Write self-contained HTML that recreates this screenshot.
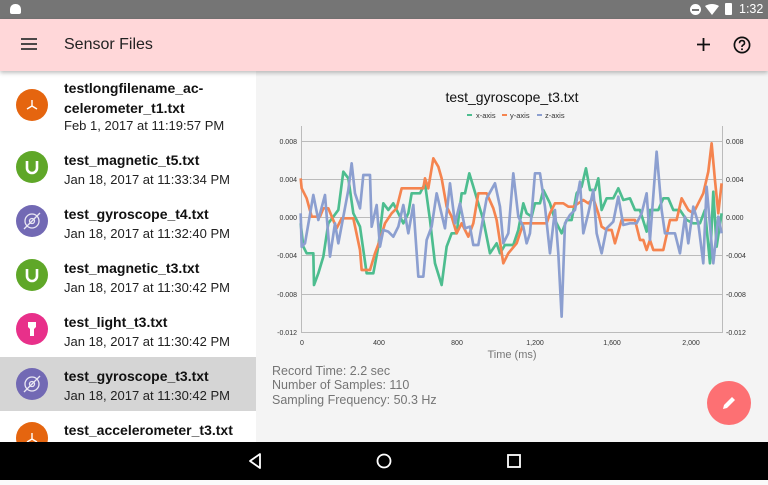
<!DOCTYPE html>
<html><head><meta charset="utf-8"><style>
*{margin:0;padding:0;box-sizing:border-box}
body{width:768px;height:480px;overflow:hidden;position:relative;font-family:"Liberation Sans",sans-serif;background:#fafafa}
.status{position:absolute;left:0;top:0;width:768px;height:19px;background:#757575;color:#fff;font-size:12px}
.appbar{position:absolute;left:0;top:19px;width:768px;height:52px;background:#ffd7d9;box-shadow:0 2px 4px rgba(0,0,0,.25);z-index:2}
.appbar .t{position:absolute;left:64px;top:17px;font-size:16px;color:#222}
.list{position:absolute;left:0;top:71px;width:256px;height:371px;background:#fff;overflow:hidden}
.item{position:absolute;left:0;width:256px}
.ic{position:absolute;left:16px;width:32px;height:32px;border-radius:50%}
.ic svg{position:absolute;left:0;top:0}
.ti{position:absolute;left:64px;font-size:14px;font-weight:bold;color:#111;line-height:20px}
.dt{position:absolute;left:64px;font-size:13px;color:#222}
.right{position:absolute;left:256px;top:71px;width:512px;height:371px;background:#f4f4f4}
.nav{position:absolute;left:0;top:442px;width:768px;height:38px;background:#000}
.info{position:absolute;left:272px;font-size:12.5px;color:#757575}
</style></head><body>
<div class="status">
<div style="position:absolute;left:10px;top:4px;width:11px;height:10px;background:#fff;border-radius:5px 5px 2px 2px"></div>
<div style="position:absolute;left:690px;top:4px;width:11px;height:11px;background:#fff;border-radius:50%"><div style="margin:5px 2px;height:1.5px;background:#757575"></div></div>
<svg style="position:absolute;left:705px;top:4px" width="14" height="11"><path d="M0 2 Q7 -2 14 2 L7 11Z" fill="#fff"/></svg>
<div style="position:absolute;left:725px;top:3px;width:7px;height:12px;background:#fff;border-radius:1px"></div>
<div style="position:absolute;left:739px;top:2px;font-size:12.5px">1:32</div>
</div>
<div class="appbar">
<svg style="position:absolute;left:21px;top:19px" width="16" height="12"><path d="M0 1H16M0 6H16M0 11H16" stroke="#333" stroke-width="1.8"/></svg>
<div class="t">Sensor Files</div>
<svg style="position:absolute;left:697px;top:19px" width="13" height="13"><path d="M6.5 0V13M0 6.5H13" stroke="#111" stroke-width="1.8"/></svg>
<svg style="position:absolute;left:733px;top:17px" width="18" height="18"><circle cx="9" cy="9" r="7.6" fill="none" stroke="#111" stroke-width="1.7"/><path d="M6.5 7.2Q6.5 4.6 9 4.6Q11.5 4.6 11.5 7Q11.5 8.5 9.8 9.2Q9 9.6 9 11" fill="none" stroke="#111" stroke-width="1.6"/><circle cx="9" cy="13.2" r="1" fill="#111"/></svg>
</div>
<div class="list">
<div class="item" style="top:0;height:69px"><div class="ic" style="top:18px;background:#e5650f"><svg width="32" height="32" fill="none" stroke="#fff" stroke-width="1.4"><path d="M16 17V11M16 17L11 20M16 17L21 20"/></svg></div><div class="ti" style="top:7px">testlongfilename_ac-<br>celerometer_t1.txt</div><div class="dt" style="top:47px">Feb 1, 2017 at 11:19:57 PM</div></div>
<div class="item" style="top:69px;height:54px"><div class="ic" style="top:11px;background:#5fa728"><svg width="32" height="32" fill="none" stroke="#fff" stroke-width="2.6"><path d="M11 10V17A5 5 0 0 0 21 17V10"/></svg></div><div class="ti" style="top:10px">test_magnetic_t5.txt</div><div class="dt" style="top:32px">Jan 18, 2017 at 11:33:34 PM</div></div>
<div class="item" style="top:123px;height:54px"><div class="ic" style="top:11px;background:#7269b4"><svg width="32" height="32" fill="none" stroke="#fff" stroke-width="1.3" opacity=".85"><circle cx="16" cy="16" r="7"/><circle cx="16" cy="16" r="2.5"/><path d="M8 24L24 8"/></svg></div><div class="ti" style="top:10px">test_gyroscope_t4.txt</div><div class="dt" style="top:32px">Jan 18, 2017 at 11:32:40 PM</div></div>
<div class="item" style="top:177px;height:54px"><div class="ic" style="top:11px;background:#5fa728"><svg width="32" height="32" fill="none" stroke="#fff" stroke-width="2.6"><path d="M11 10V17A5 5 0 0 0 21 17V10"/></svg></div><div class="ti" style="top:10px">test_magnetic_t3.txt</div><div class="dt" style="top:32px">Jan 18, 2017 at 11:30:42 PM</div></div>
<div class="item" style="top:231px;height:54px"><div class="ic" style="top:11px;background:#e8308a"><svg width="32" height="32"><path d="M12 9H20V14L18 16V23H14V16L12 14Z" fill="#fff"/></svg></div><div class="ti" style="top:10px">test_light_t3.txt</div><div class="dt" style="top:32px">Jan 18, 2017 at 11:30:42 PM</div></div>
<div class="item" style="top:286px;height:54px;background:#d5d5d5"><div class="ic" style="top:11px;background:#7269b4"><svg width="32" height="32" fill="none" stroke="#fff" stroke-width="1.3" opacity=".85"><circle cx="16" cy="16" r="7"/><circle cx="16" cy="16" r="2.5"/><path d="M8 24L24 8"/></svg></div><div class="ti" style="top:9px">test_gyroscope_t3.txt</div><div class="dt" style="top:31px">Jan 18, 2017 at 11:30:42 PM</div></div>
<div class="item" style="top:340px;height:54px"><div class="ic" style="top:11px;background:#e5650f"><svg width="32" height="32" fill="none" stroke="#fff" stroke-width="1.4"><path d="M16 17V11M16 17L11 20M16 17L21 20"/></svg></div><div class="ti" style="top:9px">test_accelerometer_t3.txt</div></div>
</div>
<div class="right">
<div style="position:absolute;left:0;width:512px;top:18px;text-align:center;font-size:14px;color:#111">test_gyroscope_t3.txt</div>
</div>
<svg style="position:absolute;left:256px;top:71px" width="512" height="371" font-family="Liberation Sans,sans-serif">
<path d="M211 44h5" stroke="#4dbd8f" stroke-width="2"/><path d="M246 44h5" stroke="#f5844f" stroke-width="2"/><path d="M281 44h5" stroke="#8c9fd0" stroke-width="2"/>
<text x="220" y="47" font-size="7.5" fill="#333">x-axis</text><text x="254" y="47" font-size="7.5" fill="#333">y-axis</text><text x="289" y="47" font-size="7.5" fill="#333">z-axis</text>
</svg>
<svg style="position:absolute;left:0;top:0" width="768" height="480" font-family="Liberation Sans,sans-serif">
<g stroke="#bbb" stroke-width="1"><path d="M301 141.5H723M301 179.5H723M301 217.5H723M301 255.5H723M301 294.5H723M301 332.5H723M301.5 126V333M722.5 126V333"/></g>
<g font-size="7" fill="#333" text-anchor="end"><text x="297" y="144">0.008</text><text x="297" y="182">0.004</text><text x="297" y="220">0.000</text><text x="297" y="258">-0.004</text><text x="297" y="297">-0.008</text><text x="297" y="335">-0.012</text></g>
<g font-size="7" fill="#333"><text x="726" y="144">0.008</text><text x="726" y="182">0.004</text><text x="726" y="220">0.000</text><text x="726" y="258">-0.004</text><text x="726" y="297">-0.008</text><text x="726" y="335">-0.012</text></g>
<g font-size="7" fill="#333" text-anchor="middle"><text x="302" y="345">0</text><text x="379" y="345">400</text><text x="457" y="345">800</text><text x="535" y="345">1,200</text><text x="612" y="345">1,600</text><text x="691" y="345">2,000</text></g>
<text x="512" y="358" font-size="11" fill="#777" text-anchor="middle">Time (ms)</text>
<g transform="translate(260,80) scale(0.3333)" fill="none" stroke-width="8" stroke-linejoin="round">
<polyline stroke="#4dbd8f" points="122,430 130,500 140,520 160,520 162,615 175,580 190,530 205,430 220,410 235,390 250,275 265,295 280,400 300,440 320,580 340,580 355,500 370,370 385,390 400,370 415,400 430,430 445,400 455,340 480,340 495,310 510,420 525,550 545,615 560,500 575,460 590,460 605,340 615,340 628,280 640,320 655,370 670,420 690,520 710,490 720,520 735,495 760,495 775,450 790,370 800,400 815,410 825,370 840,370 850,330 870,370 885,420 905,460 920,420 935,420 950,340 965,320 978,265 990,330 1005,330 1015,295 1025,390 1040,355 1060,355 1075,325 1090,360 1110,355 1125,390 1140,390 1160,455 1170,390 1195,390 1210,355 1225,355 1240,390 1260,390 1280,420 1300,430 1320,430 1335,390 1350,550 1360,335 1370,500 1385,400"/>
<polyline stroke="#f5844f" points="122,295 125,325 140,355 155,410 180,410 190,385 205,385 230,445 245,415 280,415 300,510 305,570 330,570 345,520 360,480 375,430 395,400 410,385 425,325 490,325 495,295 505,325 520,235 535,260 545,295 560,380 575,410 590,460 605,430 625,470 640,430 655,340 680,340 700,385 710,420 730,550 745,520 770,490 790,430 860,430 870,400 885,370 910,370 925,380 940,380 955,370 970,360 985,370 1000,355 1015,400 1025,440 1040,450 1055,450 1065,490 1085,420 1125,420 1140,480 1150,480 1160,510 1170,480 1180,510 1210,510 1230,420 1250,420 1265,355 1285,390 1300,400 1315,370 1330,340 1345,275 1355,190 1365,300 1375,400 1385,310"/>
<polyline stroke="#8c9fd0" points="122,400 125,500 135,490 160,345 175,420 195,345 210,530 225,430 235,490 265,330 275,250 285,340 300,385 310,285 330,285 335,440 350,375 360,500 370,450 385,455 400,470 415,440 430,375 445,460 460,375 475,590 490,590 500,480 515,440 530,340 555,445 570,310 585,430 600,370 615,445 630,440 640,495 655,495 680,355 705,310 720,380 730,490 745,460 760,280 775,410 790,440 800,490 810,460 825,280 840,280 855,380 870,520 885,390 895,520 905,710 915,430 930,405 945,390 960,305 970,460 985,400 1000,330 1010,460 1025,520 1040,445 1060,425 1075,350 1090,435 1110,430 1130,430 1145,400 1160,340 1170,480 1190,215 1205,390 1215,460 1245,460 1260,520 1275,410 1285,490 1300,380 1315,430 1330,550 1340,320 1360,550 1375,410 1385,460"/>
</g>
<circle cx="729" cy="403" r="22" fill="#fd7073"/>
<path d="M723 409L724 405L732 397L735 400L727 408Z" fill="#fff"/>
</svg>
<div class="info" style="top:364px">Record Time: 2.2 sec</div>
<div class="info" style="top:378px">Number of Samples: 110</div>
<div class="info" style="top:393px">Sampling Frequency: 50.3 Hz</div>
<div class="nav">
<svg width="768" height="38"><path d="M260 12L250 19L260 26Z" fill="none" stroke="#fff" stroke-width="1.8" stroke-linejoin="round"/><circle cx="384" cy="19" r="6.5" fill="none" stroke="#fff" stroke-width="1.8"/><rect x="508" y="13" width="12" height="12" fill="none" stroke="#fff" stroke-width="1.8"/></svg>
</div>
</body></html>
